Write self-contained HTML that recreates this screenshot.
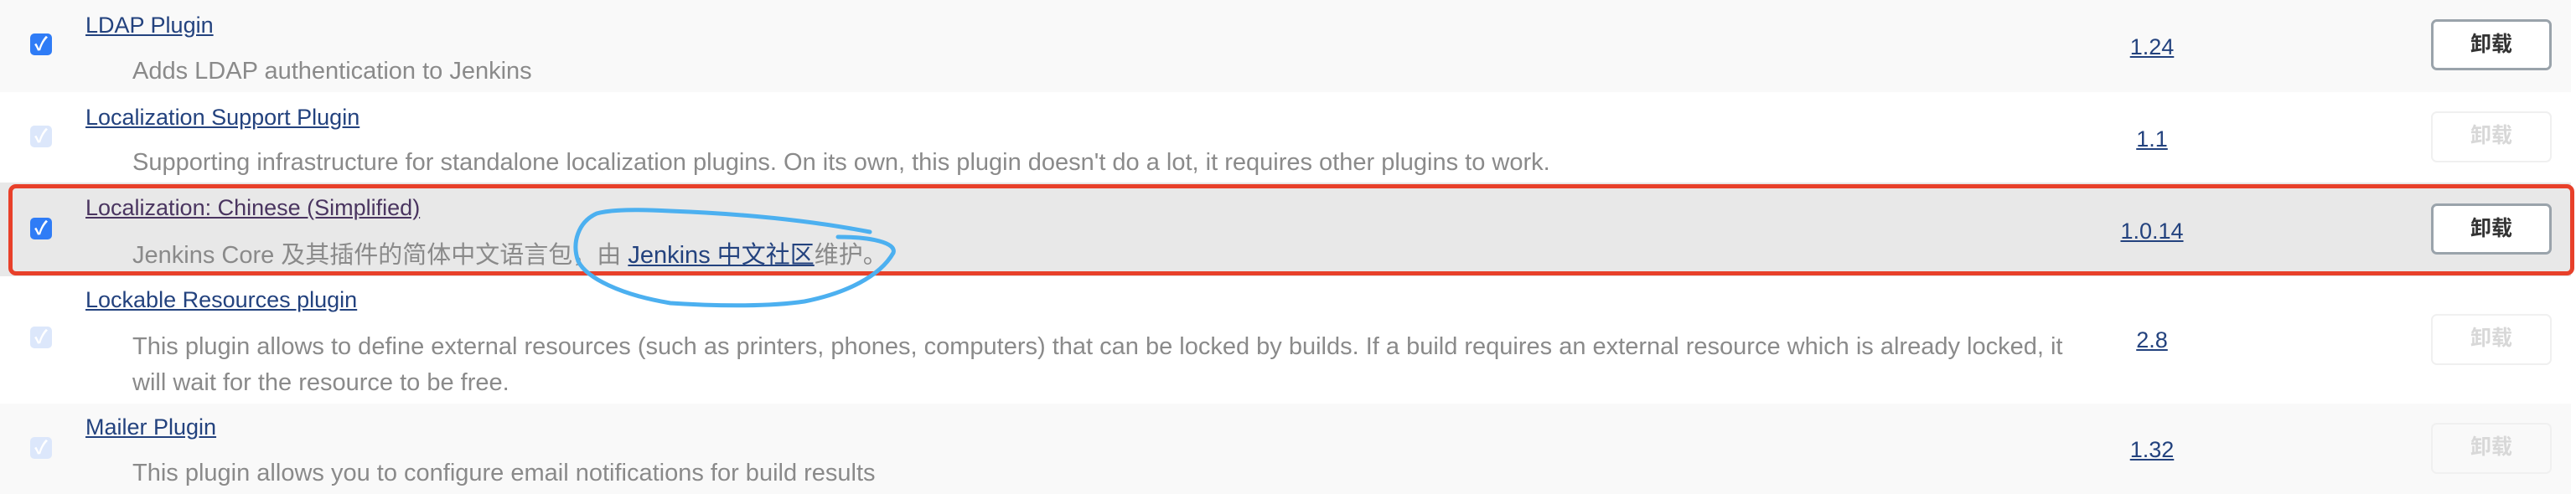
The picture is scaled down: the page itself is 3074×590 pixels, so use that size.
<!DOCTYPE html>
<html><head><meta charset="utf-8"><style>
*{margin:0;padding:0;box-sizing:border-box}
body{width:3074px;height:590px;overflow:hidden;background:#fff;font-family:"Liberation Sans","Noto Sans CJK SC",sans-serif;position:relative}
.row{position:absolute;left:0;width:3068px}
.cb{position:absolute;left:36px;width:26px;height:26px;border-radius:5px;background:#2f7cf6;color:#fff;font-size:22px;line-height:26px;text-align:center;font-weight:bold}
.cb.dis{background:#dce7fb}
.t{position:absolute;left:102px;font-size:27px;color:#23427e;text-decoration:underline;white-space:nowrap;line-height:32px}
.d{position:absolute;left:158px;width:2340px;font-size:29px;color:#8a8a8a;line-height:43px}
.d a{color:#23427e;text-decoration:underline}
.v{position:absolute;left:2468px;width:200px;text-align:center;font-size:27px;color:#23427e;text-decoration:underline;line-height:32px}
.b{position:absolute;left:2901px;width:144px;height:61px;border:3px solid #9aa3ab;border-radius:7px;background:#fff;font-size:25px;font-weight:bold;color:#333;text-align:center;line-height:55px}
.b.dis{border:2px solid #f0f0f0;color:#d8d8d8;background:transparent}
</style></head><body>
<div class="row" style="top:0;height:110px;background:#f9f9f9"></div>
<div class="row" style="top:218px;height:112px;background:#e8e8e8"></div>
<div class="row" style="top:482px;height:108px;background:#f9f9f9"></div>

<div class="cb" style="top:40px">✓</div>
<div class="t" style="top:14px">LDAP Plugin</div>
<div class="d" style="top:64px">Adds LDAP authentication to Jenkins</div>
<div class="v" style="top:40px">1.24</div>
<div class="b" style="top:23px">卸载</div>

<div class="cb dis" style="top:150px">✓</div>
<div class="t" style="top:124px">Localization Support Plugin</div>
<div class="d" style="top:173px">Supporting infrastructure for standalone localization plugins. On its own, this plugin doesn't do a lot, it requires other plugins to work.</div>
<div class="v" style="top:150px">1.1</div>
<div class="b dis" style="top:133px">卸载</div>

<div class="cb" style="top:260px">✓</div>
<div class="t" style="top:232px;color:#4a3560">Localization: Chinese (Simplified)</div>
<div class="d" style="top:284px">Jenkins Core 及其插件的简体中文语言包，由 <a>Jenkins 中文社区</a>维护。</div>
<div class="v" style="top:260px">1.0.14</div>
<div class="b" style="top:243px">卸载</div>

<div class="cb dis" style="top:390px">✓</div>
<div class="t" style="top:342px">Lockable Resources plugin</div>
<div class="d" style="top:393px">This plugin allows to define external resources (such as printers, phones, computers) that can be locked by builds. If a build requires an external resource which is already locked, it will wait for the resource to be free.</div>
<div class="v" style="top:390px">2.8</div>
<div class="b dis" style="top:375px">卸载</div>

<div class="cb dis" style="top:522px">✓</div>
<div class="t" style="top:494px">Mailer Plugin</div>
<div class="d" style="top:544px">This plugin allows you to configure email notifications for build results</div>
<div class="v" style="top:521px">1.32</div>
<div class="b dis" style="top:505px">卸载</div>

<div style="position:absolute;left:10px;top:220px;width:3062px;height:109px;border:5px solid #e8402a;border-radius:9px"></div>
<svg style="position:absolute;left:0;top:0" width="3074" height="590"><path d="M1038 277 C960 262 880 255 800 252 C760 250 730 250 712 255 C690 265 682 290 690 312 C700 332 740 352 800 362 C860 366 920 366 960 360 C1010 350 1050 330 1066 302 C1070 290 1040 283 1000 283" fill="none" stroke="#4cb0f0" stroke-width="5" stroke-linecap="round"/></svg>
</body></html>
